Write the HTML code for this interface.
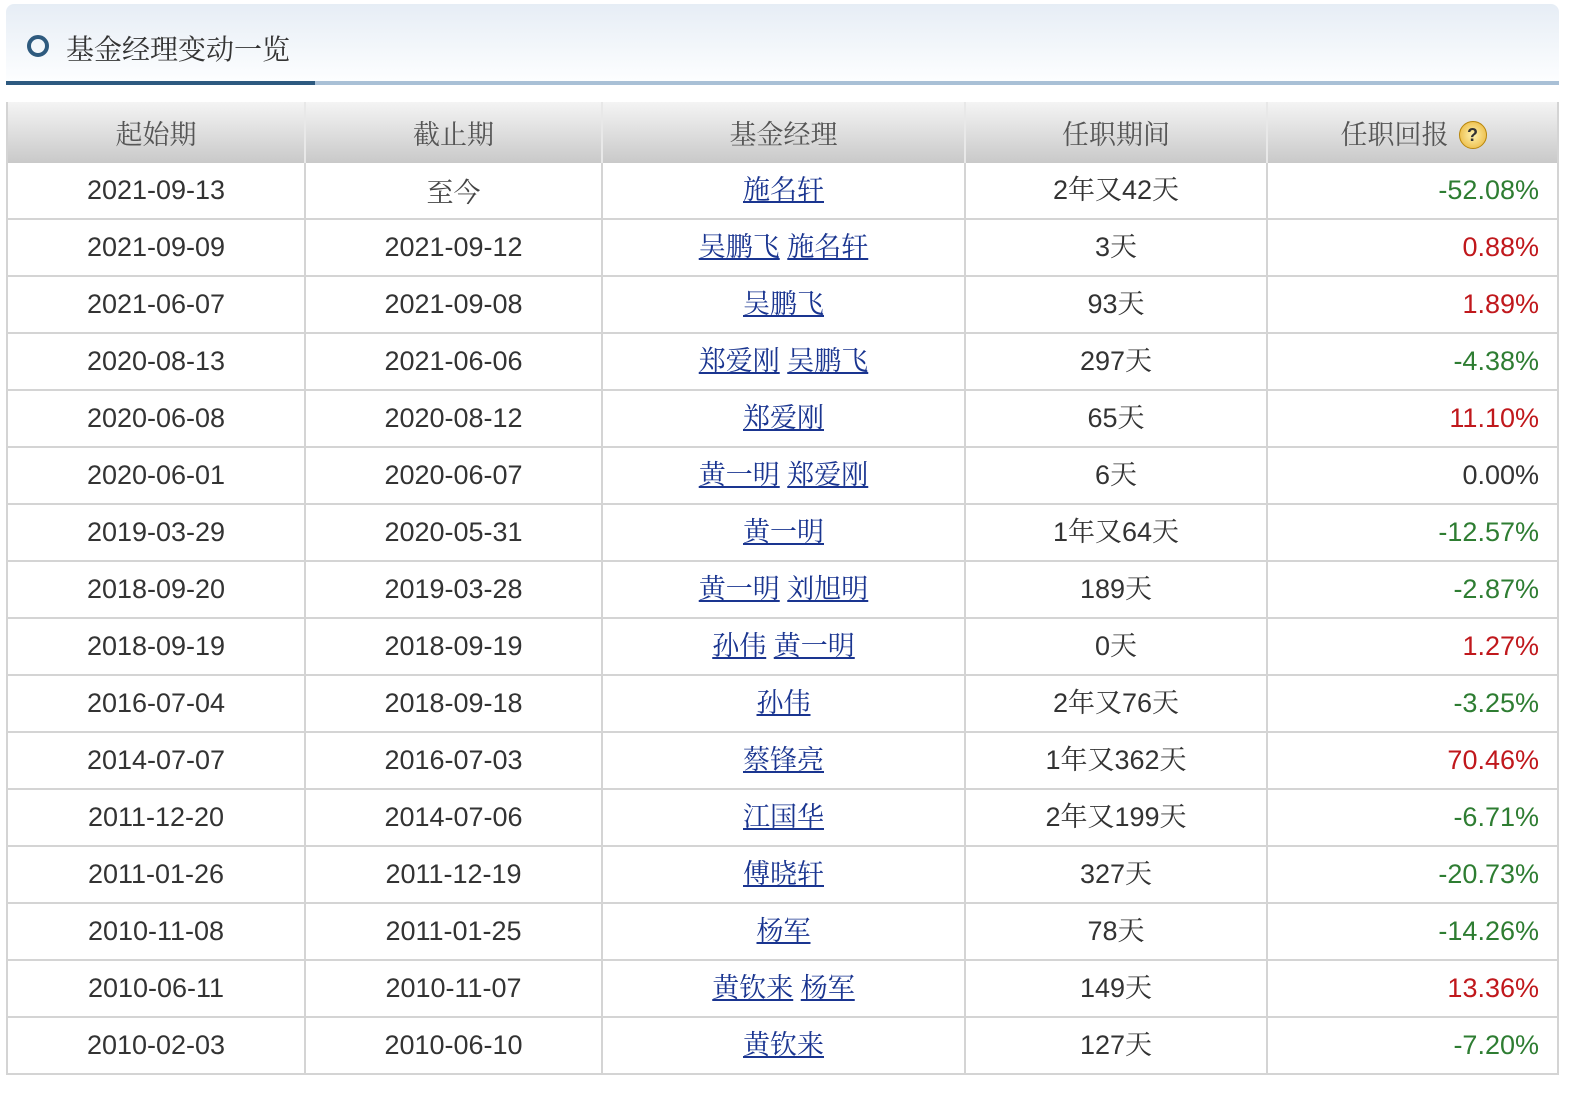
<!DOCTYPE html>
<html><head><meta charset="utf-8"><style>
*{box-sizing:border-box}
body{margin:0;background:#fff;width:1594px;height:1100px;overflow:hidden;position:relative;font-family:"Liberation Sans","Noto Sans CJK SC",sans-serif}
.bar{position:absolute;left:6px;top:4px;width:1553px;height:78px;background:linear-gradient(#e6edf5,#fdfeff);border-radius:8px 8px 0 0}
.line1{position:absolute;left:6px;top:81px;width:309px;height:4px;background:#2d5a80}
.line2{position:absolute;left:315px;top:81px;width:1244px;height:4px;background:#a9c0d6}
.circ{position:absolute;left:27px;top:35px;width:22px;height:22px;border:4px solid #2e5a7e;border-radius:50%}
.title{position:absolute;left:66px;top:28px;font:28px "Noto Serif CJK SC",serif;color:#333;line-height:40px;white-space:nowrap}
.row{position:absolute;left:6px;width:1553px;height:57px;border-bottom:2px solid #d4d4d4;border-left:2px solid #d4d4d4;border-right:2px solid #d4d4d4}
.hd{background:linear-gradient(#f4f4f4,#c9c9c9);height:61px;top:102px;border-bottom:none}
.c{position:absolute;top:0;height:100%;text-align:center;font-size:27px;color:#333;line-height:55px;white-space:nowrap}
.c+.c{border-left:2px solid #d4d4d4}
.hd .c{font:27px/61px "Noto Serif CJK SC",serif;color:#555;border-left-color:#e8e8e8}
.c1{left:0;width:296px}.c2{left:296px;width:297px}.c3{left:593px;width:363px}.c4{left:956px;width:302px}.c5{left:1258px;width:293px;text-align:right;padding-right:20px}
.hd .c5{text-align:center;padding:0 0 0 0}
.g{color:#2e7d32}.d{color:#c0181c}
a{color:#1a3590;text-decoration:underline;font-family:"Noto Serif CJK SC",serif;position:relative;top:-3px}
.cn{font-family:"Liberation Sans","Noto Serif CJK SC",serif}
.q{display:inline-block;width:28px;height:28px;border-radius:50%;background:radial-gradient(#fff3b0,#e8b030);border:1px solid #b8860b;font:bold 18px "Liberation Sans";color:#333;line-height:26px;text-align:center;vertical-align:3px;margin-left:10px}
</style></head><body>
<div class="bar"></div><div class="line1"></div><div class="line2"></div>
<div class="circ"></div><div class="title">基金经理变动一览</div>
<div class="row hd"><div class="c c1">起始期</div><div class="c c2">截止期</div><div class="c c3">基金经理</div><div class="c c4">任职期间</div><div class="c c5">任职回报<span class="q">?</span></div></div>
<div class="row" style="top:163px"><div class="c c1">2021-09-13</div><div class="c c2"><span style="font-family:'Noto Serif CJK SC',serif;color:#444">至今</span></div><div class="c c3"><a>施名轩</a></div><div class="c c4 cn">2年又42天</div><div class="c c5 g">-52.08%</div></div>
<div class="row" style="top:220px"><div class="c c1">2021-09-09</div><div class="c c2">2021-09-12</div><div class="c c3"><a>吴鹏飞</a> <a>施名轩</a></div><div class="c c4 cn">3天</div><div class="c c5 d">0.88%</div></div>
<div class="row" style="top:277px"><div class="c c1">2021-06-07</div><div class="c c2">2021-09-08</div><div class="c c3"><a>吴鹏飞</a></div><div class="c c4 cn">93天</div><div class="c c5 d">1.89%</div></div>
<div class="row" style="top:334px"><div class="c c1">2020-08-13</div><div class="c c2">2021-06-06</div><div class="c c3"><a>郑爱刚</a> <a>吴鹏飞</a></div><div class="c c4 cn">297天</div><div class="c c5 g">-4.38%</div></div>
<div class="row" style="top:391px"><div class="c c1">2020-06-08</div><div class="c c2">2020-08-12</div><div class="c c3"><a>郑爱刚</a></div><div class="c c4 cn">65天</div><div class="c c5 d">11.10%</div></div>
<div class="row" style="top:448px"><div class="c c1">2020-06-01</div><div class="c c2">2020-06-07</div><div class="c c3"><a>黄一明</a> <a>郑爱刚</a></div><div class="c c4 cn">6天</div><div class="c c5">0.00%</div></div>
<div class="row" style="top:505px"><div class="c c1">2019-03-29</div><div class="c c2">2020-05-31</div><div class="c c3"><a>黄一明</a></div><div class="c c4 cn">1年又64天</div><div class="c c5 g">-12.57%</div></div>
<div class="row" style="top:562px"><div class="c c1">2018-09-20</div><div class="c c2">2019-03-28</div><div class="c c3"><a>黄一明</a> <a>刘旭明</a></div><div class="c c4 cn">189天</div><div class="c c5 g">-2.87%</div></div>
<div class="row" style="top:619px"><div class="c c1">2018-09-19</div><div class="c c2">2018-09-19</div><div class="c c3"><a>孙伟</a> <a>黄一明</a></div><div class="c c4 cn">0天</div><div class="c c5 d">1.27%</div></div>
<div class="row" style="top:676px"><div class="c c1">2016-07-04</div><div class="c c2">2018-09-18</div><div class="c c3"><a>孙伟</a></div><div class="c c4 cn">2年又76天</div><div class="c c5 g">-3.25%</div></div>
<div class="row" style="top:733px"><div class="c c1">2014-07-07</div><div class="c c2">2016-07-03</div><div class="c c3"><a>蔡锋亮</a></div><div class="c c4 cn">1年又362天</div><div class="c c5 d">70.46%</div></div>
<div class="row" style="top:790px"><div class="c c1">2011-12-20</div><div class="c c2">2014-07-06</div><div class="c c3"><a>江国华</a></div><div class="c c4 cn">2年又199天</div><div class="c c5 g">-6.71%</div></div>
<div class="row" style="top:847px"><div class="c c1">2011-01-26</div><div class="c c2">2011-12-19</div><div class="c c3"><a>傅晓轩</a></div><div class="c c4 cn">327天</div><div class="c c5 g">-20.73%</div></div>
<div class="row" style="top:904px"><div class="c c1">2010-11-08</div><div class="c c2">2011-01-25</div><div class="c c3"><a>杨军</a></div><div class="c c4 cn">78天</div><div class="c c5 g">-14.26%</div></div>
<div class="row" style="top:961px"><div class="c c1">2010-06-11</div><div class="c c2">2010-11-07</div><div class="c c3"><a>黄钦来</a> <a>杨军</a></div><div class="c c4 cn">149天</div><div class="c c5 d">13.36%</div></div>
<div class="row" style="top:1018px"><div class="c c1">2010-02-03</div><div class="c c2">2010-06-10</div><div class="c c3"><a>黄钦来</a></div><div class="c c4 cn">127天</div><div class="c c5 g">-7.20%</div></div>
</body></html>
